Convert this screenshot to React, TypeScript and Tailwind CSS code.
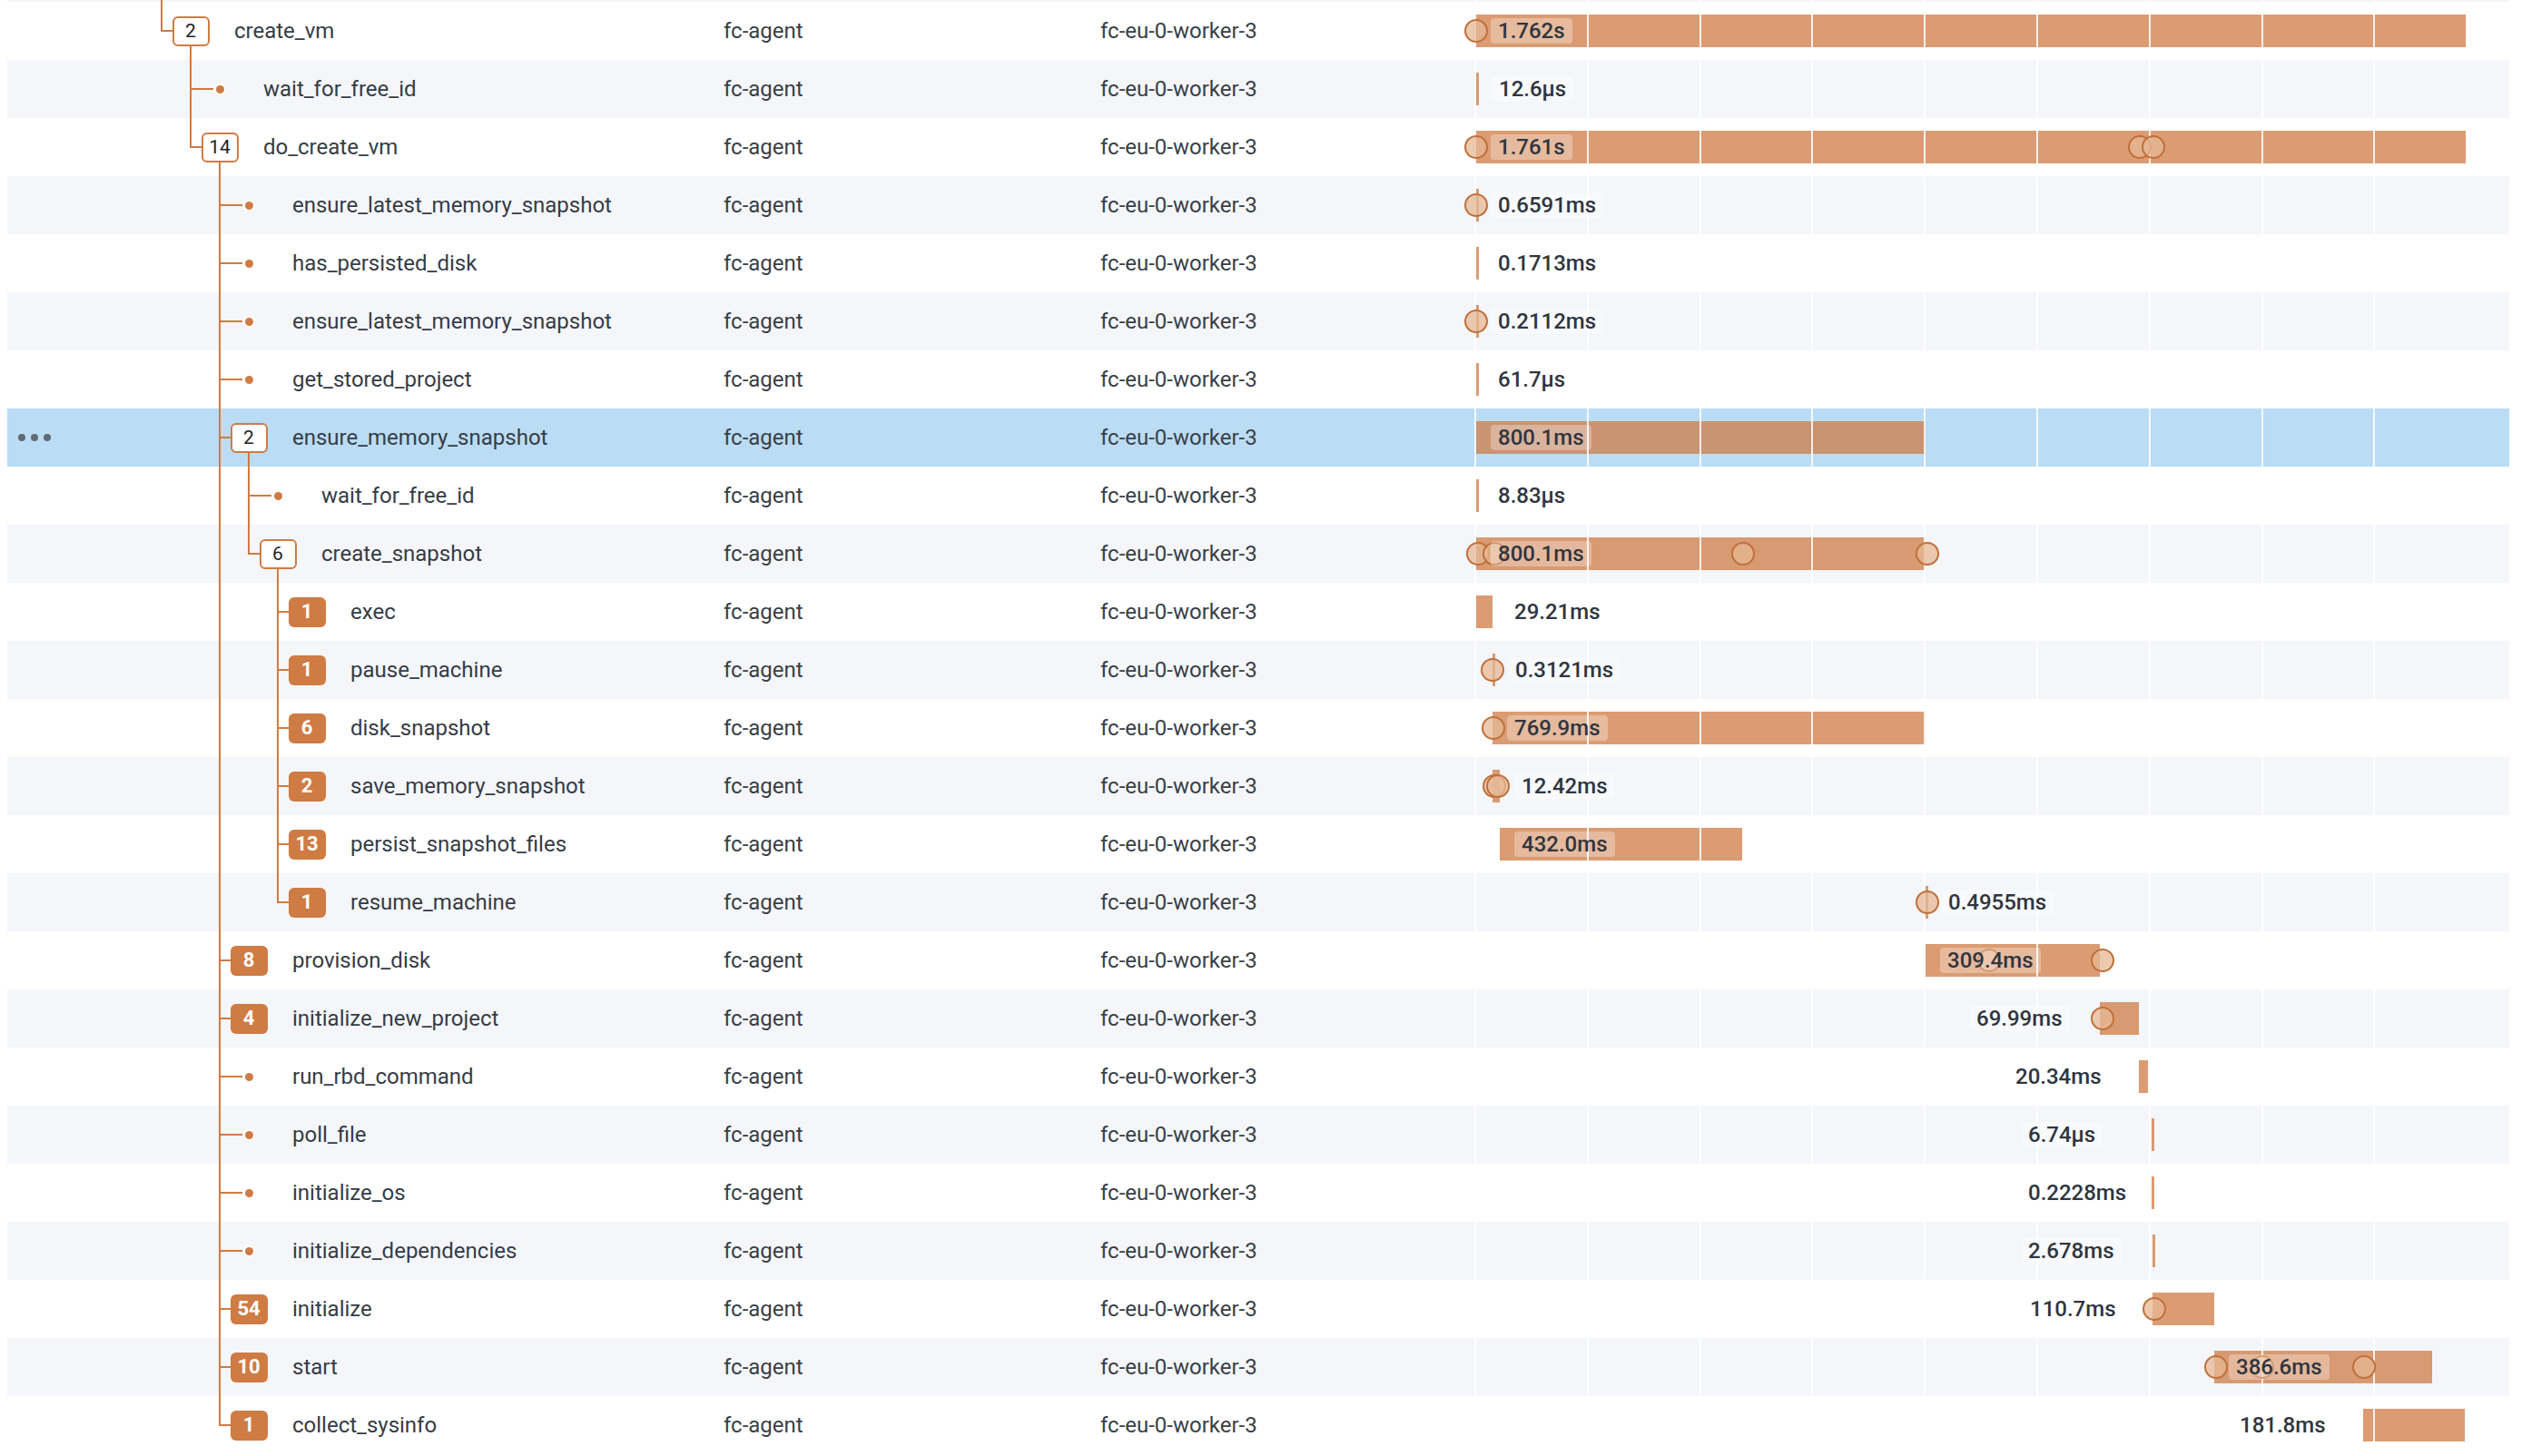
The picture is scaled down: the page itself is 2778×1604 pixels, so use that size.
import React from "react";

type Badge = { n: number; filled?: boolean };

type Span = {
  name: string;
  level: number;
  last?: boolean;
  badge?: Badge;
  kids?: boolean;
  selected?: boolean;
  hidden?: boolean;
  bar?: [number, number];
  circles?: number[];
  label?: { text: string; x: number };
};

// grid every 200ms, 0.619px per ms
const GRID = Array.from({ length: 9 }, (_, k) => Math.round(k * 123.8 * 10) / 10);

const spans: Span[] = [
  { name: "", level: 0, hidden: true },
  { name: "create_vm", level: 0, last: true, badge: { n: 2 }, kids: true, bar: [2, 1092], circles: [2], label: { text: "1.762s", x: 18 } },
  { name: "wait_for_free_id", level: 1, bar: [2, 5], label: { text: "12.6μs", x: 19 } },
  { name: "do_create_vm", level: 1, last: true, badge: { n: 14 }, kids: true, bar: [2, 1092], circles: [2, 733, 748], label: { text: "1.761s", x: 18 } },
  { name: "ensure_latest_memory_snapshot", level: 2, bar: [2, 5], circles: [2], label: { text: "0.6591ms", x: 18 } },
  { name: "has_persisted_disk", level: 2, bar: [2, 5], label: { text: "0.1713ms", x: 18 } },
  { name: "ensure_latest_memory_snapshot", level: 2, bar: [2, 5], circles: [2], label: { text: "0.2112ms", x: 18 } },
  { name: "get_stored_project", level: 2, bar: [2, 5], label: { text: "61.7μs", x: 18 } },
  { name: "ensure_memory_snapshot", level: 2, badge: { n: 2 }, kids: true, selected: true, bar: [2, 497], label: { text: "800.1ms", x: 18 } },
  { name: "wait_for_free_id", level: 3, bar: [2, 5], label: { text: "8.83μs", x: 18 } },
  { name: "create_snapshot", level: 3, last: true, badge: { n: 6 }, kids: true, bar: [2, 497], circles: [4, 22, 296, 499], label: { text: "800.1ms", x: 18 } },
  { name: "exec", level: 4, badge: { n: 1, filled: true }, bar: [2, 20], label: { text: "29.21ms", x: 36 } },
  { name: "pause_machine", level: 4, badge: { n: 1, filled: true }, bar: [20, 23], circles: [20], label: { text: "0.3121ms", x: 37 } },
  { name: "disk_snapshot", level: 4, badge: { n: 6, filled: true }, bar: [20, 497], circles: [21], label: { text: "769.9ms", x: 36 } },
  { name: "save_memory_snapshot", level: 4, badge: { n: 2, filled: true }, bar: [20, 28], circles: [22, 26], label: { text: "12.42ms", x: 44 } },
  { name: "persist_snapshot_files", level: 4, badge: { n: 13, filled: true }, bar: [28, 295], label: { text: "432.0ms", x: 44 } },
  { name: "resume_machine", level: 4, last: true, badge: { n: 1, filled: true }, bar: [497, 500], circles: [499], label: { text: "0.4955ms", x: 514 } },
  { name: "provision_disk", level: 2, badge: { n: 8, filled: true }, bar: [497, 689], circles: [567, 692], label: { text: "309.4ms", x: 513 } },
  { name: "initialize_new_project", level: 2, badge: { n: 4, filled: true }, bar: [689, 732], circles: [692], label: { text: "69.99ms", x: 545 } },
  { name: "run_rbd_command", level: 2, bar: [732, 742], label: { text: "20.34ms", x: 588 } },
  { name: "poll_file", level: 2, bar: [746, 749], label: { text: "6.74μs", x: 602 } },
  { name: "initialize_os", level: 2, bar: [746, 749], label: { text: "0.2228ms", x: 602 } },
  { name: "initialize_dependencies", level: 2, bar: [747, 750], label: { text: "2.678ms", x: 602 } },
  { name: "initialize", level: 2, badge: { n: 54, filled: true }, bar: [747, 815], circles: [749], label: { text: "110.7ms", x: 604 } },
  { name: "start", level: 2, badge: { n: 10, filled: true }, bar: [815, 1055], circles: [817, 868, 980], label: { text: "386.6ms", x: 831 } },
  { name: "collect_sysinfo", level: 2, last: true, badge: { n: 1, filled: true }, bar: [979, 1091], label: { text: "181.8ms", x: 835 } },
];

function NodeBadge({ badge }: { badge?: Badge }) {
  if (!badge) {
    return <span className="relative h-[9px] w-[9px] shrink-0 rounded-full bg-[#cf7b44] ring-2 ring-white" />;
  }
  if (badge.filled) {
    return (
      <span className="relative flex h-[33px] w-[41px] shrink-0 items-center justify-center rounded-md bg-[#cf7b44] text-[22px] font-bold leading-none text-white">
        {badge.n}
      </span>
    );
  }
  return (
    <span className="relative flex h-[33px] w-[41px] shrink-0 items-center justify-center rounded-md border-2 border-[#cf7b44] bg-white text-[21px] leading-none text-[#1f2328]">
      {badge.n}
    </span>
  );
}

function Tree({ span, guides }: { span: Span; guides: boolean[] }) {
  return (
    <div className="flex h-full w-[789px] shrink-0 items-center">
      <div className="flex w-[154px] shrink-0 items-center gap-[6px] pl-3">
        {span.selected &&
          [0, 1, 2].map((i) => <span key={i} className="h-2 w-2 rounded-full bg-[#646a73]" />)}
      </div>
      {guides.map((on, j) => (
        <div key={j} className="relative h-full w-8 shrink-0">
          {on && <div className="absolute left-[15px] top-0 h-full w-[2px] bg-[#cf7b44]" />}
        </div>
      ))}
      <div className="relative h-full w-8 shrink-0">
        <div className={`absolute left-[15px] top-0 w-[2px] bg-[#cf7b44] ${span.last ? "h-[33px]" : "h-full"}`} />
        {!span.hidden && (
          <div className={`absolute left-[15px] top-[31px] h-[2px] bg-[#cf7b44] ${span.badge ? "w-[13px]" : "w-[26px]"}`} />
        )}
      </div>
      <div className="relative flex h-full w-8 shrink-0 items-center justify-center">
        {span.kids && <div className="absolute bottom-0 left-[15px] top-10 w-[2px] bg-[#cf7b44]" />}
        {!span.hidden && <NodeBadge badge={span.badge} />}
      </div>
      <div className="w-8 shrink-0" />
      <span className="whitespace-nowrap text-[24px] text-[#363c46]">{span.name}</span>
    </div>
  );
}

function Timeline({ span }: { span: Span }) {
  const bar = span.bar;
  return (
    <div className="relative h-full flex-1">
      {bar && (
        <div
          className="absolute top-[14px] h-9 bg-[#cf7b44]/75"
          style={{ left: bar[0], width: Math.max(bar[1] - bar[0], 3) }}
        />
      )}
      {GRID.map((g) => (
        <div key={g} className="absolute top-0 h-full w-[2px] bg-white/85" style={{ left: g }} />
      ))}
      {span.circles?.map((c, i) => (
        <div
          key={i}
          className="absolute top-[19px] h-[26px] w-[26px] rounded-full border-2 border-[#c0703a] bg-[#e6b896]/75"
          style={{ left: c - 13 }}
        />
      ))}
      {span.label && (
        <div
          className="absolute top-[18px] flex h-7 items-center whitespace-nowrap rounded bg-white/30 px-2 text-[24px] font-medium leading-none text-[#2f3540]"
          style={{ left: span.label.x }}
        >
          {span.label.text}
        </div>
      )}
    </div>
  );
}

export default function App() {
  const lastAt: boolean[] = [];
  const rows = spans.map((span, idx) => {
    const guides: boolean[] = [];
    for (let j = 0; j < span.level; j++) guides.push(lastAt[j] === false);
    lastAt[span.level] = !!span.last;
    lastAt.length = span.level + 1;

    const stripe = idx % 2 === 0;
    const bg = span.selected ? "bg-[#badcf5]" : stripe ? "bg-[#f4f6fa]" : "bg-white";

    return (
      <div key={idx} className={`flex h-16 w-full items-center ${bg} ${span.hidden ? "-mt-[62px]" : ""}`}>
        <Tree span={span} guides={guides} />
        <div className="w-[415px] shrink-0 whitespace-nowrap text-[24px] text-[#3a3f47]">
          {span.hidden ? "" : "fc-agent"}
        </div>
        <div className="w-[412px] shrink-0 whitespace-nowrap text-[24px] text-[#3a3f47]">
          {span.hidden ? "" : "fc-eu-0-worker-3"}
        </div>
        <Timeline span={span} />
      </div>
    );
  });

  return (
    <div className="h-[1604px] w-[2778px] overflow-hidden bg-white pl-2 pr-[14px] font-[Roboto,sans-serif]">
      {rows}
    </div>
  );
}
